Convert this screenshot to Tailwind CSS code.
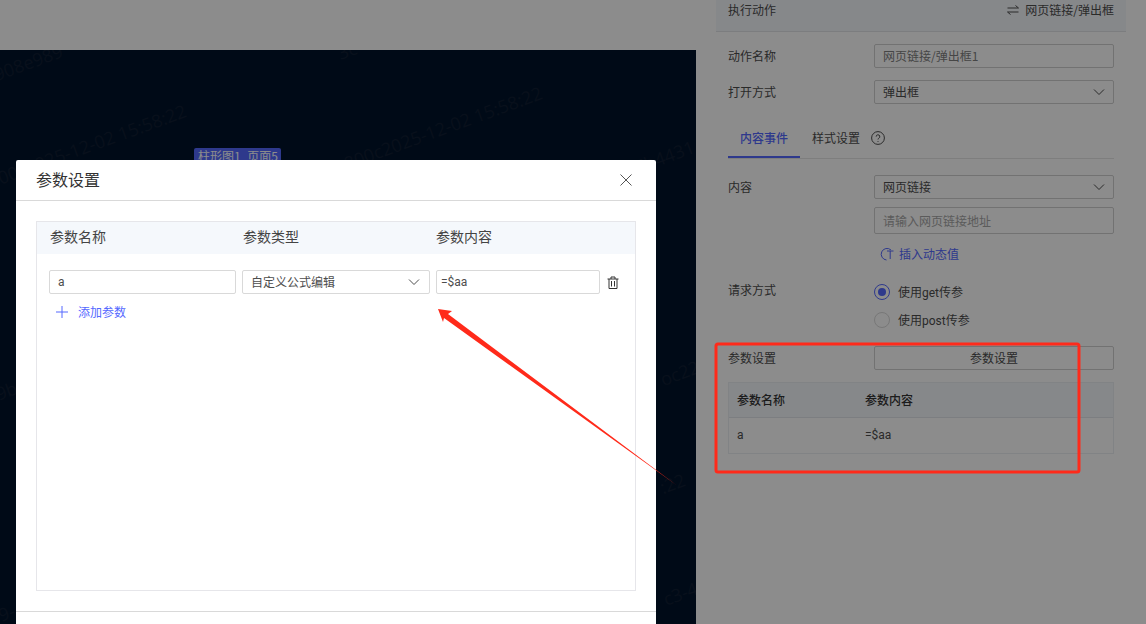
<!DOCTYPE html>
<html lang="zh-CN">
<head>
  <meta charset="UTF-8" />
  <title>参数设置</title>
  <script src="https://cdn.jsdelivr.net/npm/@tailwindcss/browser@4"></script>
</head>
<body class="bg-white font-['Noto_Sans_CJK_SC',sans-serif] text-xs text-[#4d4d4d]">
  <div class="relative flex h-[624px] w-[1146px] overflow-hidden">

    <!-- left: top bar + canvas -->
    <div class="flex w-[696px] flex-col">
      <div class="h-[50px] bg-white"></div>
      <div class="relative flex-1 overflow-hidden bg-[#00132a] font-['Open_Sans',sans-serif] text-[18px] text-[#101e33]">
        <span class="absolute right-[634px] top-[-12px] origin-right -rotate-20 whitespace-nowrap">1c908e989</span>
        <span class="absolute right-[340px] top-[-15px] origin-right -rotate-20 whitespace-nowrap">3c</span>
        <span class="absolute right-[511px] top-[48px] origin-right -rotate-20 whitespace-nowrap">800c2025-12-02 15:58:22</span>
        <span class="absolute right-[155px] top-[30px] origin-right -rotate-20 whitespace-nowrap">800c2025-12-02 15:58:22</span>
        <span class="absolute right-[3px] top-[84px] origin-right -rotate-20 whitespace-nowrap">7b4431</span>
        <span class="absolute right-[-8px] top-[302px] origin-right -rotate-20 whitespace-nowrap">oc22-</span>
        <span class="absolute right-[12px] top-[417px] origin-right -rotate-20 whitespace-nowrap">:22</span>
        <span class="absolute right-[-10px] top-[522px] origin-right -rotate-20 whitespace-nowrap">c3-44</span>
        <span class="absolute right-[680px] top-[325px] origin-right -rotate-20 whitespace-nowrap">9b</span>
        <span class="absolute right-[682px] top-[548px] origin-right -rotate-20 whitespace-nowrap">9-</span>
        <div class="absolute left-[194px] top-[98px] h-[24px] w-[87px] rounded-[2px] bg-[#5468ff] pl-1 font-['Noto_Sans_CJK_SC',sans-serif] text-xs leading-[16px] text-white">柱形图1_页面5</div>
      </div>
    </div>

    <!-- right: action settings -->
    <aside class="w-[450px] bg-white px-5">
      <div class="flex h-[32px] items-center justify-between border-b border-[#e2e4e8] bg-[#f5f8fc] px-3 pb-[11px]">
        <span>执行动作</span>
        <span class="flex items-center gap-[6px]">
          <svg class="h-3 w-3" viewBox="0 0 12 12" fill="none" stroke="#4d4d4d" stroke-width="1"><path d="M0.5 4h11L8.500 1.500M11.500 8H0.500l3 2.500"/></svg>
          网页链接/弹出框
        </span>
      </div>
      <div class="px-3">
        <div class="mt-3 flex items-center">
          <span class="w-[146px]">动作名称</span>
          <div class="flex h-6 w-[240px] items-center rounded-[2px] border border-[#cfcfcf] px-2 text-[#808080]">网页链接/弹出框1</div>
        </div>
        <div class="mt-3 flex items-center">
          <span class="w-[146px]">打开方式</span>
          <div class="flex h-6 w-[240px] items-center justify-between rounded-[2px] border border-[#cfcfcf] px-2">
            弹出框
            <svg class="h-2 w-3" viewBox="0 0 12 8" fill="none" stroke="#4d4d4d"><path d="M1 1.500l5 5 5-5"/></svg>
          </div>
        </div>

        <div class="mt-[14px] flex h-[41px] border-b border-[#e5e5e5]">
          <div class="w-[72px] border-b-2 border-[#5468ff] pt-[12px] text-center font-medium leading-[16px] text-[#5468ff]">内容事件</div>
          <div class="ml-3 pt-[12px] leading-[16px]">样式设置</div>
          <svg class="ml-[11px] mt-[13px] h-[14px] w-[14px]" viewBox="0 0 14 14" fill="none" stroke="#4d4d4d"><circle cx="7" cy="7" r="6.400"/><path d="M5.200 5.600a1.800 1.800 0 1 1 2.600 1.600c-.6.3-.8.7-.8 1.300M7 10v.9"/></svg>
        </div>

        <div class="mt-4 flex items-center">
          <span class="w-[146px]">内容</span>
          <div class="flex h-6 w-[240px] items-center justify-between rounded-[2px] border border-[#cfcfcf] px-2">
            网页链接
            <svg class="h-2 w-3" viewBox="0 0 12 8" fill="none" stroke="#4d4d4d"><path d="M1 1.500l5 5 5-5"/></svg>
          </div>
        </div>
        <div class="ml-[146px] mt-2 flex h-[27px] w-[240px] items-center rounded-[2px] border border-[#cfcfcf] px-2 text-[#a6a6a6]">请输入网页链接地址</div>
        <div class="ml-[146px] mt-[11px] flex h-[18px] items-center pl-[6px] text-[#5468ff]">
          <svg class="h-[14px] w-[14px]" viewBox="0 0 14 14" fill="none" stroke="#5468ff"><path d="M11 3A5.800 5.800 0 1 0 6.500 13M7 4h6.500M10.200 4v8"/></svg>
          <span class="ml-[5px]">插入动态值</span>
        </div>

        <div class="mt-[17px] flex">
          <span class="w-[146px] leading-[20px]">请求方式</span>
          <div>
            <div class="flex h-6 items-center">
              <span class="flex h-4 w-4 items-center justify-center rounded-full border border-[#5468ff]"><span class="h-2 w-2 rounded-full bg-[#5468ff]"></span></span>
              <span class="ml-2">使用<span class="font-['Roboto']">get</span>传参</span>
            </div>
            <div class="mt-1 flex h-6 items-center">
              <span class="h-4 w-4 rounded-full border border-[#d9d9d9]"></span>
              <span class="ml-2">使用<span class="font-['Roboto']">post</span>传参</span>
            </div>
          </div>
        </div>

        <div class="mt-[14px] flex items-center">
          <span class="w-[146px]">参数设置</span>
          <div class="flex h-6 w-[240px] items-center justify-center rounded-[2px] border border-[#cfcfcf]">参数设置</div>
        </div>

        <div class="mt-3 w-[386px] border border-[#eceef2]">
          <div class="flex h-[35px] items-center border-b border-[#e2e6ec] bg-[#f5f8fc] px-2 font-medium text-[#333]">
            <span class="w-[128px]">参数名称</span><span>参数内容</span>
          </div>
          <div class="flex h-[35px] items-center px-2 pb-[2px]">
            <span class="w-[128px]"><span class="font-['Roboto']">a</span></span><span><span class="font-['Roboto']">=$aa</span></span>
          </div>
        </div>
      </div>
    </aside>

    <!-- dimming layer -->
    <div class="absolute inset-0 bg-black/45"></div>

    <!-- dialog -->
    <div class="absolute left-[16px] top-[160px] h-[500px] w-[640px] rounded-[2px] bg-white">
      <div class="flex h-[41px] items-center justify-between border-b border-[#d9d9d9] pb-[3px] pl-5 pr-[24px] text-base text-[#333]">
        <span>参数设置</span>
        <svg class="mt-[3px] h-3 w-3" viewBox="0 0 12 12" fill="none" stroke="#555"><path d="M.5.5l11 11M11.500.5l-11 11"/></svg>
      </div>
      <div class="px-5 pt-5">
        <div class="h-[370px] border border-[#e6e6ea]">
          <div class="flex h-[32px] items-center bg-[#f5f8fc] px-[13px] pb-[4px] text-sm text-[#444]">
            <span class="w-[193px]">参数名称</span><span class="w-[193px]">参数类型</span><span>参数内容</span>
          </div>
          <div class="flex items-center gap-[6px] px-3 pt-4">
            <div class="flex h-6 w-[187px] items-center rounded-[2px] border border-[#d9d9d9] px-2"><span class="font-['Roboto']">a</span></div>
            <div class="flex h-6 w-[188px] items-center justify-between rounded-[2px] border border-[#d9d9d9] pl-2 pr-[9px]">
              自定义公式编辑
              <svg class="h-2 w-3" viewBox="0 0 12 8" fill="none" stroke="#4d4d4d"><path d="M1 1.500l5 5 5-5"/></svg>
            </div>
            <div class="flex h-6 w-[164px] items-center rounded-[2px] border border-[#d9d9d9] px-1"><span class="font-['Roboto']">=$aa</span></div>
            <svg class="ml-[1px] h-[13px] w-3" viewBox="0 0 12 13" fill="none" stroke="#333"><path d="M.5 3h11M4 3V1h4v2M2 3v9.500h8V3M4.500 5v5.500M7.500 5v5.500"/></svg>
          </div>
          <div class="ml-[19px] mt-[9px] flex h-[18px] items-center text-[#5468ff]">
            <svg class="h-3 w-3" viewBox="0 0 12 12" fill="none" stroke="#5468ff"><path d="M6 0v12M0 6h12"/></svg>
            <span class="ml-[10px]">添加参数</span>
          </div>
        </div>
      </div>
      <div class="mt-5 border-t border-[#d9d9d9]"></div>
    </div>

    <!-- red annotations -->
    <svg class="absolute inset-0" width="1146" height="624" viewBox="0 0 1146 624" fill="none">
      <rect x="716" y="344" width="363" height="128" rx="2" stroke="#ff2a1a" stroke-width="3"/>
      <path d="M438 309L452 311L448 314L677 485.500L444 318L443 322Z" fill="#ff2a1a"/>
    </svg>
  </div>
</body>
</html>
